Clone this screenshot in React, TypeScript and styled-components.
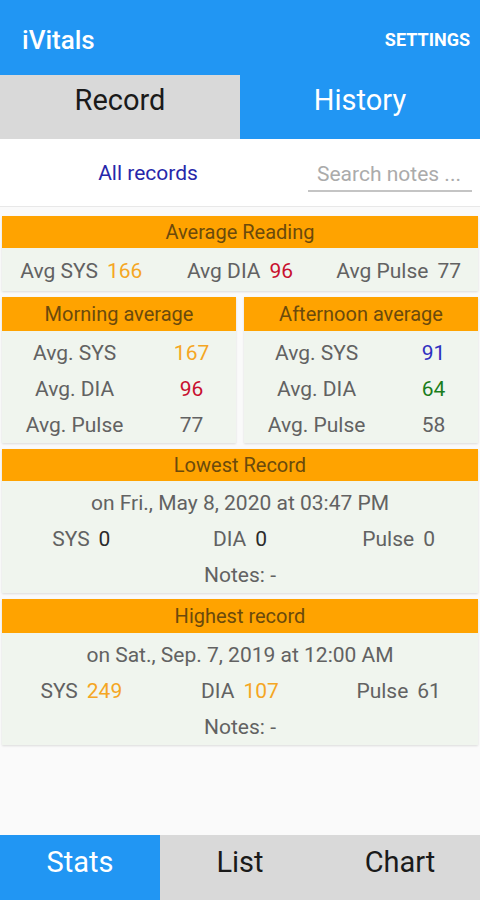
import styled, { createGlobalStyle } from "styled-components";

const GlobalStyle = createGlobalStyle`
  html, body {
    margin: 0;
    padding: 0;
    background: #fafafa;
  }
  body {
    font-family: Roboto, "Noto Sans", "Liberation Sans", sans-serif;
  }
  * {
    box-sizing: border-box;
  }
`;

const BLUE = "#2196f3";
const ORANGE = "#ffa300";
const GREY_TAB = "#d9d9d9";

interface Stat {
  label: string;
  value: string;
  color?: string;
}

const average: Stat[] = [
  { label: "Avg SYS", value: "166", color: "#f5a623" },
  { label: "Avg DIA", value: "96", color: "#c8102e" },
  { label: "Avg Pulse", value: "77" },
];

const morning: Stat[] = [
  { label: "Avg. SYS", value: "167", color: "#f5a623" },
  { label: "Avg. DIA", value: "96", color: "#c8102e" },
  { label: "Avg. Pulse", value: "77" },
];

const afternoon: Stat[] = [
  { label: "Avg. SYS", value: "91", color: "#2f2fc0" },
  { label: "Avg. DIA", value: "64", color: "#1b7d1b" },
  { label: "Avg. Pulse", value: "58" },
];

const lowest: Stat[] = [
  { label: "SYS", value: "0", color: "#2a2a2a" },
  { label: "DIA", value: "0", color: "#2a2a2a" },
  { label: "Pulse", value: "0" },
];

const highest: Stat[] = [
  { label: "SYS", value: "249", color: "#f5a623" },
  { label: "DIA", value: "107", color: "#f5a623" },
  { label: "Pulse", value: "61" },
];

function PeriodCard(props: { title: string; stats: Stat[] }) {
  const { title, stats } = props;
  return (
    <Card>
      <CardHeader $tall>{title}</CardHeader>
      <PairBody>
        {stats.map((s) => (
          <PairRow key={s.label}>
            <span>{s.label}</span>
            <Value $color={s.color}>{s.value}</Value>
          </PairRow>
        ))}
      </PairBody>
    </Card>
  );
}

function RecordCard(props: { title: string; date: string; stats: Stat[] }) {
  const { title, date, stats } = props;
  return (
    <Card>
      <CardHeader $tall={title.startsWith("Highest")}>{title}</CardHeader>
      <RecordBody>
        <Line>{date}</Line>
        <Thirds>
          {stats.map((s) => (
            <Cell key={s.label}>
              {s.label}
              <Value $color={s.color}>{s.value}</Value>
            </Cell>
          ))}
        </Thirds>
        <Line>Notes: -</Line>
      </RecordBody>
    </Card>
  );
}

export default function App() {
  return (
    <Screen>
      <GlobalStyle />
      <AppBar>
        <Title>iVitals</Title>
        <Settings>SETTINGS</Settings>
      </AppBar>
      <Tabs>
        <Tab $active={false}>Record</Tab>
        <Tab $active>History</Tab>
      </Tabs>
      <FilterRow>
        <AllRecords>All records</AllRecords>
        <SearchBox placeholder="Search notes ..." />
      </FilterRow>
      <Content>
        <Card>
          <CardHeader>Average Reading</CardHeader>
          <AvgBody>
            {average.map((s) => (
              <Cell key={s.label}>
                {s.label}
                <Value $color={s.color}>{s.value}</Value>
              </Cell>
            ))}
          </AvgBody>
        </Card>
        <Halves>
          <PeriodCard title="Morning average" stats={morning} />
          <PeriodCard title="Afternoon average" stats={afternoon} />
        </Halves>
        <RecordCard title="Lowest Record" date="on Fri., May 8, 2020 at 03:47 PM" stats={lowest} />
        <RecordCard title="Highest record" date="on Sat., Sep. 7, 2019 at 12:00 AM" stats={highest} />
      </Content>
      <BottomNav>
        <NavItem $active>Stats</NavItem>
        <NavItem $active={false}>List</NavItem>
        <NavItem $active={false}>Chart</NavItem>
      </BottomNav>
    </Screen>
  );
}

const Screen = styled.div`
  width: 480px;
  height: 900px;
  display: flex;
  flex-direction: column;
  background: #fafafa;
  overflow: hidden;
`;

const AppBar = styled.header`
  height: 75px;
  flex-shrink: 0;
  background: ${BLUE};
  display: flex;
  align-items: center;
  justify-content: space-between;
  padding: 4px 10px 0 22px;
  color: #fff;
`;

const Title = styled.h1`
  margin: 0;
  font-size: 26px;
  font-weight: 500;
`;

const Settings = styled.span`
  font-size: 18px;
  font-weight: 700;
`;

const Tabs = styled.nav`
  height: 64px;
  flex-shrink: 0;
  display: flex;
`;

const Tab = styled.div<{ $active: boolean }>`
  flex: 1;
  text-align: center;
  font-size: 29px;
  line-height: 50px;
  background: ${(p) => (p.$active ? BLUE : GREY_TAB)};
  color: ${(p) => (p.$active ? "#fff" : "#1a1a1a")};
`;

const FilterRow = styled.div`
  height: 68px;
  flex-shrink: 0;
  background: #fff;
  display: flex;
  align-items: center;
  gap: 12px;
  border-bottom: 1px solid #e8e8e8;
`;

const AllRecords = styled.div`
  width: 296px;
  text-align: center;
  font-size: 21px;
  color: #2727aa;
`;

const SearchBox = styled.input`
  width: 164px;
  margin-top: 8px;
  border: none;
  border-bottom: 2px solid #c4c4c4;
  padding: 0 0 4px 9px;
  font-family: inherit;
  font-size: 21px;
  color: #333;
  background: transparent;
  outline: none;
  &::placeholder {
    color: #ababab;
  }
`;

const Content = styled.main`
  flex: 1;
  display: flex;
  flex-direction: column;
  gap: 6px;
  padding: 9px 2px 0;
  background: #fafafa;
`;

const Card = styled.section`
  background: #f0f5ee;
  box-shadow: 0 1px 2px rgba(0, 0, 0, 0.12);
  color: #626262;
  font-size: 21px;
`;

const CardHeader = styled.div<{ $tall?: boolean }>`
  height: ${(p) => (p.$tall ? 34 : 32)}px;
  line-height: ${(p) => (p.$tall ? 34 : 32)}px;
  background: ${ORANGE};
  color: #6b4a0c;
  text-align: center;
  font-size: 20px;
`;

const Value = styled.span<{ $color?: string }>`
  color: ${(p) => p.$color ?? "#626262"};
  margin-left: 9px;
`;

const Cell = styled.div`
  text-align: center;
  white-space: nowrap;
`;

const AvgBody = styled.div`
  display: grid;
  grid-template-columns: repeat(3, 1fr);
  line-height: 34px;
  padding: 6px 0 3px;
`;

const Halves = styled.div`
  display: grid;
  grid-template-columns: 1fr 1fr;
  gap: 8px;
`;

const PairBody = styled.div`
  padding: 4px 0 0;
`;

const PairRow = styled.div`
  display: grid;
  grid-template-columns: 62fr 38fr;
  line-height: 36px;
  text-align: center;

  ${Value} {
    margin-left: 0;
  }
`;

const RecordBody = styled.div`
  padding: 4px 0 0;
  line-height: 36px;
`;

const Line = styled.div`
  text-align: center;
`;

const Thirds = styled.div`
  display: grid;
  grid-template-columns: repeat(3, 1fr);
`;

const BottomNav = styled.nav`
  height: 65px;
  flex-shrink: 0;
  display: flex;
  background: ${GREY_TAB};
`;

const NavItem = styled.div<{ $active: boolean }>`
  width: 160px;
  text-align: center;
  font-size: 29px;
  line-height: 54px;
  background: ${(p) => (p.$active ? BLUE : "transparent")};
  color: ${(p) => (p.$active ? "#fff" : "#1a1a1a")};
`;
